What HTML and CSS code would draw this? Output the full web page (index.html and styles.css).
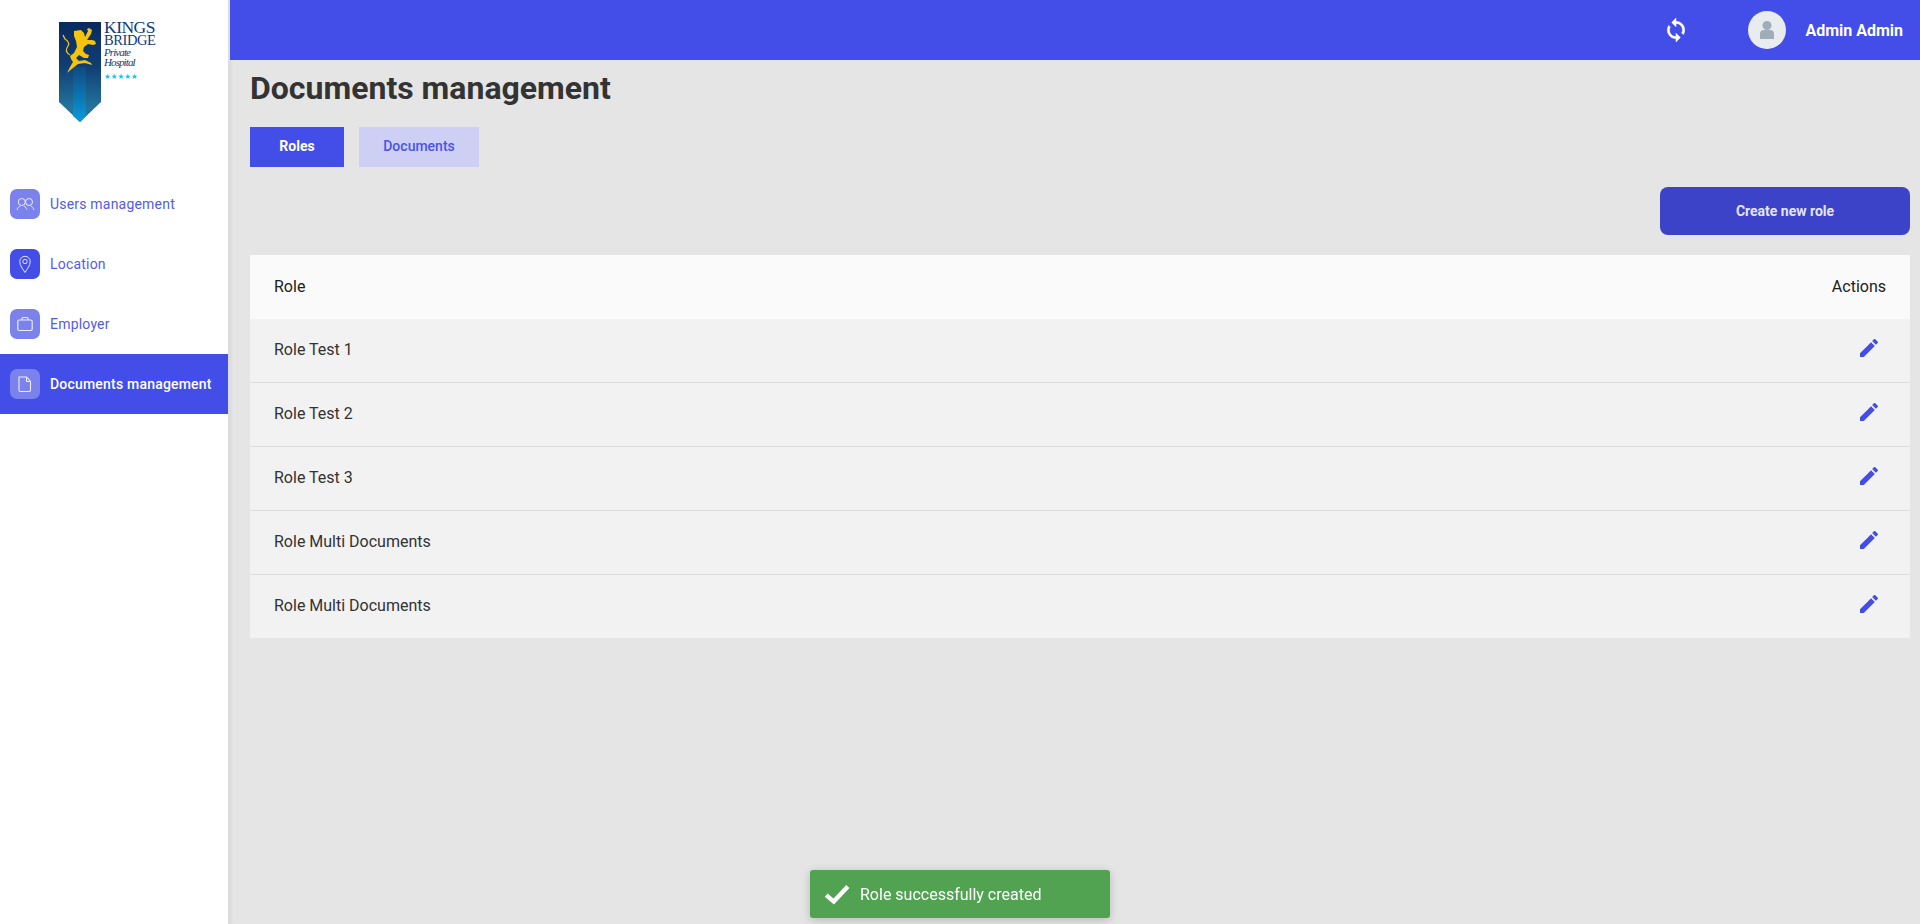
FILE: index.html
```html
<!DOCTYPE html>
<html lang="en">
<head>
<meta charset="utf-8">
<title>Documents management</title>
<link rel="stylesheet" href="styles.css">
</head>
<body>
<div class="app">
  <aside class="sidebar">
    <div class="logo">
      <svg class="crest" viewBox="0 0 42 100" width="42" height="100">
        <defs>
          <linearGradient id="band" x1="0" y1="0" x2="0" y2="1">
            <stop offset="0" stop-color="#0a2a5e"/>
            <stop offset="0.45" stop-color="#0f3f74"/>
            <stop offset="0.85" stop-color="#23739c"/>
          </linearGradient>
          <linearGradient id="mid" x1="0" y1="0" x2="0" y2="1">
            <stop offset="0" stop-color="#0f4a80"/>
            <stop offset="1" stop-color="#0a9ade"/>
          </linearGradient>
        </defs>
        <path d="M0 0H42V80L21 100L0 80Z" fill="url(#band)"/>
        <path d="M14 45H27V94L21 100L14 94Z" fill="url(#mid)"/>
        <path d="M15 9L22 8L25 11L26 15L29 9L28 7L30 6L33 8L32 12L28 18L33 18L36 19L37 22L34 23L29 22L25 25L24 29L27 32L30 33L29 36L25 36L20 33L17 36L20 39L26 38L32 41L33 43L26 41L19 42L14 46L8 51L11 45L14 40L12 37L11 34L15 31L18 25L17 19L15 14Z" fill="#f6c40f"/>
        <path d="M11 33C6 30 7 27 9 24C11 21 9 19 6 17L4 13" fill="none" stroke="#f6c40f" stroke-width="1.300"/>
      </svg>
      <div class="wordmark">
        <div class="kings">KINGS</div>
        <div class="bridge">BRIDGE</div>
        <div class="private">Private</div>
        <div class="private">Hospital</div>
        <div class="stars">★★★★★</div>
      </div>
    </div>
    <nav class="nav">
      <a class="nav-item">
        <span class="nav-icon">
          <svg viewBox="0 0 20 20" width="20" height="20" fill="none" stroke="#fff" stroke-width="1" opacity=".85"><circle cx="6.800" cy="8" r="3.500"/><circle cx="14" cy="8" r="3.500"/><path d="M2 16c.5-2 1.800-3.300 3.400-4M8.800 12c1.500.5 2.700 2 3.200 3.500M15.800 12c1.600.5 2.600 2 3 4"/></svg>
        </span>
        <span>Users management</span>
      </a>
      <a class="nav-item">
        <span class="nav-icon strong">
          <svg viewBox="0 0 20 20" width="20" height="20" fill="none" stroke="#fff" stroke-width="1" opacity=".85"><path d="M10 18.500C7.500 14.500 4.800 11.500 4.800 7.500a5.200 5.200 0 0 1 10.400 0c0 4-2.700 7-5.200 11z"/><circle cx="10" cy="7.500" r="2.200"/></svg>
        </span>
        <span>Location</span>
      </a>
      <a class="nav-item">
        <span class="nav-icon">
          <svg viewBox="0 0 20 20" width="20" height="20" fill="none" stroke="#fff" stroke-width="1.200" opacity=".85"><rect x="2.800" y="6" width="14.400" height="10.500" rx="1.500"/><path d="M7 6V4.500a1 1 0 0 1 1-1h4a1 1 0 0 1 1 1V6"/></svg>
        </span>
        <span>Employer</span>
      </a>
      <a class="nav-item active">
        <span class="nav-icon">
          <svg viewBox="0 0 20 20" width="20" height="20" fill="none" stroke="#fff" stroke-width="1.100" opacity=".85"><path d="M4 3h7.500l4 4.500v8.500a1.500 1.500 0 0 1-1.500 1.500H5.500A1.500 1.500 0 0 1 4 16z"/><path d="M11.500 3v4.500h4"/></svg>
        </span>
        <span>Documents management</span>
      </a>
    </nav>
  </aside>
  <div class="main">
    <header class="topbar">
      <svg class="sync" viewBox="0 0 24 24" width="26" height="26" fill="#fff" stroke="#fff" stroke-width=".5"><path d="M12 4V1L8 5l4 4V6c3.310 0 6 2.690 6 6 0 1.010-.25 1.970-.7 2.800l1.460 1.460C19.540 15.030 20 13.570 20 12c0-4.420-3.580-8-8-8zm0 14c-3.310 0-6-2.690-6-6 0-1.010.25-1.970.7-2.800L5.240 7.740C4.460 8.970 4 10.430 4 12c0 4.420 3.580 8 8 8v3l4-4-4-4v3z"/></svg>
      <span class="avatar">
        <svg viewBox="0 0 38 38" width="38" height="38" fill="#a0adb8"><circle cx="19" cy="14.500" r="4.500"/><path d="M12 28v-5a4 4 0 0 1 4-4h6a4 4 0 0 1 4 4v5z"/></svg>
      </span>
      <span class="username">Admin Admin</span>
    </header>
    <main class="content">
      <h1 class="title">Documents management</h1>
      <div class="tabs">
        <button class="tab on">Roles</button>
        <button class="tab off">Documents</button>
      </div>
      <div class="actions">
        <button class="create">Create new role</button>
      </div>
      <div class="table">
        <div class="row head"><span>Role</span><span>Actions</span></div>
        <div class="row"><span>Role Test 1</span><svg class="edit" viewBox="0 0 24 24" width="24" height="24"><path d="M3 17.250V21h3.750L17.810 9.940l-3.750-3.750L3 17.250zM20.710 7.040a1 1 0 0 0 0-1.410l-2.340-2.340a1 1 0 0 0-1.410 0l-1.830 1.830 3.750 3.750 1.830-1.830z"/></svg></div>
        <div class="row"><span>Role Test 2</span><svg class="edit" viewBox="0 0 24 24" width="24" height="24"><path d="M3 17.250V21h3.750L17.810 9.940l-3.750-3.750L3 17.250zM20.710 7.040a1 1 0 0 0 0-1.410l-2.340-2.340a1 1 0 0 0-1.410 0l-1.830 1.830 3.750 3.750 1.830-1.830z"/></svg></div>
        <div class="row"><span>Role Test 3</span><svg class="edit" viewBox="0 0 24 24" width="24" height="24"><path d="M3 17.250V21h3.750L17.810 9.940l-3.750-3.750L3 17.250zM20.710 7.040a1 1 0 0 0 0-1.410l-2.340-2.340a1 1 0 0 0-1.410 0l-1.830 1.830 3.750 3.750 1.830-1.830z"/></svg></div>
        <div class="row"><span>Role Multi Documents</span><svg class="edit" viewBox="0 0 24 24" width="24" height="24"><path d="M3 17.250V21h3.750L17.810 9.940l-3.750-3.750L3 17.250zM20.710 7.040a1 1 0 0 0 0-1.410l-2.340-2.340a1 1 0 0 0-1.410 0l-1.830 1.830 3.750 3.750 1.830-1.830z"/></svg></div>
        <div class="row"><span>Role Multi Documents</span><svg class="edit" viewBox="0 0 24 24" width="24" height="24"><path d="M3 17.250V21h3.750L17.810 9.940l-3.750-3.750L3 17.250zM20.710 7.040a1 1 0 0 0 0-1.410l-2.340-2.340a1 1 0 0 0-1.410 0l-1.830 1.830 3.750 3.750 1.830-1.830z"/></svg></div>
      </div>
    </main>
  </div>
</div>
<div class="toast">
  <svg viewBox="0 0 24 24" width="26" height="26" fill="none" stroke="#fff" stroke-width="4"><path d="M2 13l7 6L22 5"/></svg>
  <span>Role successfully created</span>
</div>
</body>
</html>
```
FILE: styles.css
```css
* { box-sizing: border-box; }
html, body { margin: 0; height: 100%; }
body { font-family: Roboto, "Liberation Sans", sans-serif; background: #e5e5e5; color: #333; overflow: hidden; }
.app { display: flex; height: 924px; }

.sidebar { width: 230px; flex: none; background: #fff; border-right: 2px solid #dcdcde; }
.logo { height: 174px; padding: 22px 0 0 59px; display: flex; gap: 3px; align-items: flex-start; }
.crest { flex: none; }
.wordmark { color: #12397a; font-family: "Liberation Serif", serif; width: 54px; margin-top: -1px; }
.kings { font-size: 17.500px; line-height: 13px; letter-spacing: -.5px; }
.bridge { font-size: 14.500px; line-height: 13px; letter-spacing: -.4px; }
.private { font-size: 11px; line-height: 10px; font-style: italic; letter-spacing: -.9px; }
.stars { font-size: 7.500px; line-height: 8px; color: #1cc0ee; margin-top: 6px; font-family: "DejaVu Sans", sans-serif; }

.nav { display: flex; flex-direction: column; }
.nav-item { height: 60px; display: flex; align-items: center; gap: 10px; padding-left: 10px; font-size: 14px; color: #535be9; letter-spacing: .2px; }
.nav-item.active { background: #434de8; color: #fff; font-weight: 500; }
.nav-icon { width: 30px; height: 30px; border-radius: 7px; background: #7c82ec; display: flex; align-items: center; justify-content: center; flex: none; }
.nav-icon.strong { background: #434de8; }
.active .nav-icon { background: #7c82ec; }

.main { flex: 1; min-width: 0; display: flex; flex-direction: column; }
.topbar { height: 60px; flex: none; background: #434de8; display: flex; align-items: center; padding-right: 17px; justify-content: flex-end; color: #fff; }
.sync { margin-right: 59px; }
.avatar { width: 38px; height: 38px; border-radius: 50%; background: #e9ecef; margin-right: 19px; }
.username { font-size: 16px; font-weight: 700; }

.content { flex: 1; padding: 10px 10px 0 20px; box-shadow: inset 3px 0 3px -2px rgba(60,70,120,.08); }
.title { margin: 0; font-size: 32px; line-height: 36px; font-weight: 700; color: #333; }
.tabs { display: flex; gap: 15px; margin-top: 21px; }
.tab { height: 40px; border: 0; padding: 0 0 2px; font: 500 14px Roboto, sans-serif; }
.tab.on { width: 94px; background: #434de8; color: #fff; font-weight: 700; }
.tab.off { width: 120px; background: #cdcff5; color: #4a53e8; }
.actions { display: flex; justify-content: flex-end; margin-top: 20px; }
.create { width: 250px; height: 48px; border: 0; border-radius: 8px; background: #3c43c9; color: #e4e5f8; font: 700 14px Roboto, sans-serif; }

.table { margin-top: 20px; background: #f2f2f2; }
.row { height: 63.900px; display: flex; align-items: center; justify-content: space-between; padding: 0 24px 2px; font-size: 16px; color: #333; border-bottom: 1px solid #dcdcdc; }
.row:last-child { border-bottom: 0; height: 63px; }
.row.head { background: #fafafa; border-bottom: 0; color: #212121; font-size: 16px; height: 64px; padding-bottom: 1px; }
.edit { fill: #434de8; margin: 0 5px 2px 0; }

.toast { position: fixed; left: 810px; top: 870px; width: 300px; height: 48px; background: #51a351; border-radius: 3px; color: #fff; font-size: 16px; display: flex; align-items: center; gap: 10px; padding-left: 14px; box-shadow: 0 2px 10px rgba(0,0,0,.2); }
```
